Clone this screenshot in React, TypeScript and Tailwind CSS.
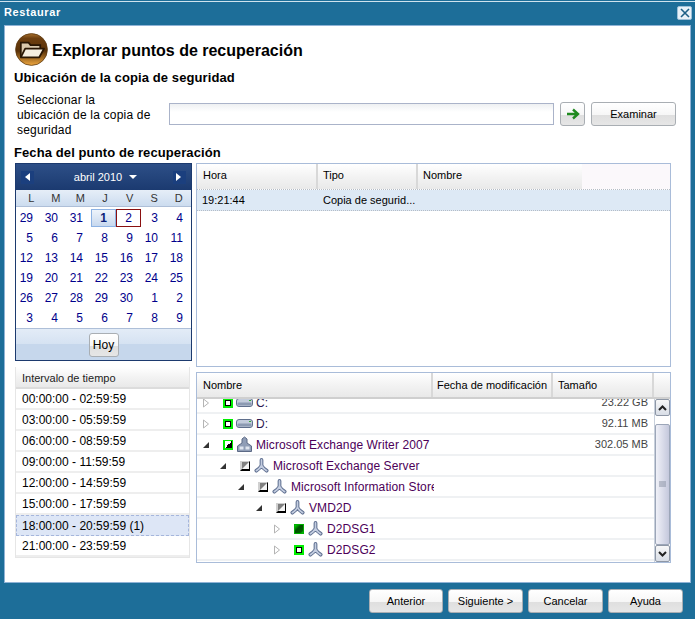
import React from "react";

const days = [
  [29,30,31,1,2,3,4],[5,6,7,8,9,10,11],[12,13,14,15,16,17,18],[19,20,21,22,23,24,25],[26,27,28,29,30,1,2],[3,4,5,6,7,8,9],
];
const intervals = ["00:00:00 - 02:59:59","03:00:00 - 05:59:59","06:00:00 - 08:59:59","09:00:00 - 11:59:59","12:00:00 - 14:59:59","15:00:00 - 17:59:59","18:00:00 - 20:59:59 (1)","21:00:00 - 23:59:59"];

function FolderIcon() {
  return (
    <svg width="33" height="33" viewBox="0 0 34 34">
      <defs>
        <linearGradient id="br" x1="0" y1="0" x2="0" y2="1">
          <stop offset="0" stopColor="#a8702c" /><stop offset="0.15" stopColor="#6e3f10" /><stop offset="0.55" stopColor="#5a3208" /><stop offset="1" stopColor="#f0a840" />
        </linearGradient>
      </defs>
      <circle cx="17" cy="17" r="16.4" fill="url(#br)" stroke="#5a3810" strokeWidth="0.8" />
      <path d="M6 25V10h8l2 2.5h10V16" fill="#d9c8ac" stroke="#2a1704" strokeWidth="1.8" />
      <path d="M6 25l4.5-9H30l-5 9z" fill="#f5eee0" stroke="#2a1704" strokeWidth="1.8" strokeLinejoin="round" />
    </svg>
  );
}
function Arrow() {
  return (
    <svg width="14" height="12" viewBox="0 0 14 12">
      <path d="M1 6h10M7 1.5L12 6l-5 4.5" fill="none" stroke="#1f8a1f" strokeWidth="2.4" />
    </svg>
  );
}
function Btn({ w, children, cls = "" }: { w: string; children: React.ReactNode; cls?: string }) {
  return (
    <div className={`${w} ${cls} h-[24px] flex items-center justify-center rounded-[3px] border border-[#a9aeb3] bg-[linear-gradient(#ffffff_0%,#f6f6f6_55%,#dfdfdf_56%,#e6e6e6_100%)] text-[11px] text-black`}>
      {children}
    </div>
  );
}
function Expand({ open }: { open: boolean }) {
  return open ? (
    <svg width="8" height="8" viewBox="0 0 8 8"><path d="M7 1v6H1z" fill="#333" /></svg>
  ) : (
    <svg width="8" height="10" viewBox="0 0 8 10"><path d="M1.5 1l5 4-5 4z" fill="#fff" stroke="#b4b4b4" /></svg>
  );
}
function Check({ kind }: { kind: "green" | "solid" | "half" | "gray" }) {
  if (kind === "green")
    return <span className="w-[10px] h-[10px] bg-[#00ee00] flex items-center justify-center"><span className="block w-[4px] h-[4px] bg-white border border-black box-content" /></span>;
  if (kind === "solid")
    return <span className="block w-[10px] h-[10px] bg-[linear-gradient(135deg,#00e000_0%,#005000_40%,#006000_80%,#00e000_100%)] border border-[#00b000]" />;
  if (kind === "half")
    return <span className="w-[10px] h-[10px] bg-[#00ee00] flex items-center justify-center"><span className="block w-[7px] h-[7px] bg-[linear-gradient(135deg,#fff_50%,#000_50%)]" /></span>;
  return <span className="w-[10px] h-[10px] bg-[linear-gradient(135deg,#d0d0d0_45%,#000_55%)] flex items-center justify-center"><span className="block w-[7px] h-[7px] bg-[linear-gradient(135deg,#808080_45%,#f4f4f4_55%)]" /></span>;
}
function Tri() {
  const d = "M8 2v6M8 8C7 10 5 12 2.5 13.5M8 8c1 2 3 4 5.5 5.5";
  return (
    <svg width="15" height="15" viewBox="0 0 16 16">
      <path d={d} fill="none" stroke="#5f6f90" strokeWidth="4" strokeLinecap="round" />
      <path d={d} fill="none" stroke="#c3cde0" strokeWidth="1.8" strokeLinecap="round" />
    </svg>
  );
}
function Drive() {
  return (
    <svg width="17" height="11" viewBox="0 0 17 11">
      <rect x="0.5" y="1.5" width="16" height="8" rx="2.5" fill="#c3ccdc" stroke="#5f6f8c" />
      <rect x="1.5" y="5.5" width="14" height="3" rx="1" fill="#8c9ab2" />
      <rect x="13" y="3" width="2" height="1" fill="#2fae2f" />
    </svg>
  );
}
function Server() {
  return (
    <svg width="17" height="17" viewBox="0 0 17 17">
      <path d="M8.5 1l2.5 2v4l4.5 3v5.5h-14V10L6 7V3z" fill="#8f9db6" stroke="#5c6a86" />
      <rect x="3.5" y="10.5" width="4" height="3" fill="#dfe5ef" /><rect x="9.5" y="10.5" width="4" height="3" fill="#dfe5ef" />
    </svg>
  );
}
function Row({ indent, open, check, icon, label, size, color = "text-[#4c0058]", sizeCls = "text-[#444]" }: {
  indent: string; open: boolean; check: "green" | "solid" | "half" | "gray"; icon: React.ReactNode; label: string; size?: string; color?: string; sizeCls?: string;
}) {
  return (
    <div className="h-[21px] border-b-2 border-[#eff1f3] flex items-center shrink-0">
      <div className="w-[237px] shrink-0 overflow-hidden flex items-center h-full">
        <div className={`${indent} w-[18px] flex justify-center shrink-0`}><Expand open={open} /></div>
        <div className="ml-[8px] shrink-0"><Check kind={check} /></div>
        <div className="ml-[3px] w-[17px] flex justify-center shrink-0">{icon}</div>
        <span className={`ml-[3px] text-[12px] tracking-[0.1px] whitespace-nowrap ${color}`}>{label}</span>
      </div>
      <div className={`grow text-right pr-[6px] text-[11px] whitespace-nowrap ${sizeCls}`}>{size}</div>
    </div>
  );
}
const hdr = "bg-[linear-gradient(#ffffff_0%,#f3f3f3_50%,#e9e9e9_100%)]";

export default function App() {
  return (
    <div className="w-[695px] h-[619px] bg-[#1d6e99] flex flex-col overflow-hidden font-['Liberation_Sans',sans-serif] text-[11px] text-black">
      <div className="h-[24px] shrink-0 border-t border-t-[#cfe3ee] mt-[1px] flex items-center justify-between pl-[4px] pr-[3px] pb-[2px]">
        <span className="text-white font-bold text-[11px] tracking-[0.6px]">Restaurar</span>
        <span className="w-[15px] h-[14px] rounded-[2px] bg-[#e8f1f8] border border-[#9dc0d8] flex items-center justify-center">
          <svg width="10" height="10" viewBox="0 0 10 10"><path d="M1 1l8 8M9 1l-8 8" stroke="#1d5f86" strokeWidth="1.6" /></svg>
        </span>
      </div>
      <div className="mx-[4px] h-[558px] shrink-0 bg-white border border-[#8fb3d6] pl-[10px] pr-[15px] flex flex-col">
        <div className="flex items-center gap-[4px] mt-[6px] h-[34px]">
          <FolderIcon />
          <h1 className="text-[16px] font-bold mt-[3px]">Explorar puntos de recuperación</h1>
        </div>
        <div className="text-[13px] font-bold mt-[4px] -ml-[1px] leading-[15px] tracking-[0.1px]">Ubicación de la copia de seguridad</div>
        <div className="flex items-center mt-[7px] h-[46px]">
          <div className="w-[154px] pl-[2px] text-[12px] leading-[15px] tracking-[0.2px] shrink-0">
            <span className="block">Seleccionar la</span>
            <span className="block">ubicación de la copia de</span>
            <span className="block">seguridad</span>
          </div>
          <div className="w-[385px] h-[22px] -mt-[2px] border border-[#aab3c9] bg-[linear-gradient(#eef0f2,#ffffff_40%)] shrink-0" />
          <Btn w="w-[25px]" cls="ml-[6px] shrink-0 -mt-[2px]"><Arrow /></Btn>
          <Btn w="w-[85px]" cls="ml-[6px] shrink-0 -mt-[2px]">Examinar</Btn>
        </div>
        <div className="text-[13px] font-bold mt-[7px] -ml-[1px] leading-[15px] tracking-[0.1px]">Fecha del punto de recuperación</div>
        <div className="flex mt-[3px]">
          <div className="w-[177px] flex flex-col shrink-0">
            <div className="h-[198px] border border-[#1c3a6e] flex flex-col">
              <div className="h-[26px] bg-[linear-gradient(#2d4f87,#1b3a70)] flex items-center justify-between px-[5px] text-white text-[11px]">
                <span className="w-[13px] h-[13px] bg-[#1b3f7e] flex items-center justify-center"><svg width="6" height="8" viewBox="0 0 6 8"><path d="M5 0v8L0 4z" fill="#fff" /></svg></span>
                <span className="flex items-center gap-[7px] ml-[4px]">abril 2010<svg width="8" height="4" viewBox="0 0 8 4"><path d="M0 0h8L4 4z" fill="#fff" /></svg></span>
                <span className="w-[13px] h-[13px] bg-[#1b3f7e] flex items-center justify-center"><svg width="6" height="8" viewBox="0 0 6 8"><path d="M0 0v8l5-4z" fill="#fff" /></svg></span>
              </div>
              <div className="h-[17px] grid grid-cols-7 bg-[linear-gradient(#e6eef8,#ccdcef)] border-b border-[#aebfd8] text-[#333] items-center pl-[3px]">
                {["L","M","M","J","V","S","D"].map((d, i) => <span key={i} className="text-center">{d}</span>)}
              </div>
              <div className="h-[121px] pt-[1px] grid grid-cols-7 grid-rows-6 bg-white">
                {days.flat().map((d, i) => (
                  <div key={i} className={`flex items-center justify-end pr-[8px] text-[12px] ${i === 3 ? "bg-[linear-gradient(#eef4fb,#c7d8ee)] border border-[#8db2e3] font-bold text-[#0a1f78] h-[18px] my-[1px]" : i === 4 ? "border border-[#8a1010] text-[#00008b] h-[18px] my-[1px]" : "text-[#00008b]"}`}>{d}</div>
                ))}
              </div>
              <div className="grow border-t border-[#aebfd8] bg-[linear-gradient(#e3ecf7,#d5e2f2_50%,#c6d7ec_50%,#c6d7ec)] flex items-center justify-center">
                <Btn w="w-[30px]" cls="text-[12px]">Hoy</Btn>
              </div>
            </div>
            <div className="w-[175px] mt-[6px] border-x border-b border-[#e6e6e6]">
              <div className={`h-[22px] ${hdr} border-b-2 border-[#dcdcdc] flex items-center pl-[6px] pt-[2px] text-[11px] text-[#222]`}>Intervalo de tiempo</div>
              {intervals.map((t, i) => (
                <div key={t} className={`h-[21px] flex items-center text-[12px] ${i === 6 ? "pl-[5px] bg-[#dde6f6] border border-dashed border-[#a5b6dc]" : "pl-[6px] border-b-2 border-[#eeeeee]"}`}>{t}</div>
              ))}
            </div>
          </div>
          <div className="w-[475px] ml-[4px] flex flex-col shrink-0">
            <div className="h-[204px] border border-[#a9bcd9] flex flex-col shrink-0">
              <div className={`h-[26px] ${hdr} flex text-[11px] border-b border-dotted border-[#b5bcc6] shrink-0`}>
                <div className="w-[121px] pl-[6px] pt-[3px] border-r-2 border-[#d8d8d8]">Hora</div>
                <div className="w-[100px] pl-[5px] pt-[3px] border-r-2 border-[#d8d8d8]">Tipo</div>
                <div className="w-[164px] pl-[5px] pt-[3px]">Nombre</div>
                <div className="grow bg-[#fbf8fb]" />
              </div>
              <div className="h-[21px] flex items-center bg-[#dde9f5] text-[11px] border-b border-dotted border-[#b5bcc6] pt-[1px]">
                <div className="w-[121px] pl-[5px]">19:21:44</div>
                <div className="pl-[5px]">Copia de segurid...</div>
              </div>
            </div>
            <div className="mt-[5px] h-[191px] border border-[#a9bcd9] flex flex-col shrink-0">
              <div className={`h-[26px] ${hdr} flex text-[11px] border-b-2 border-[#cfcfcf] shrink-0`}>
                <div className="w-[236px] pl-[6px] pt-[4px] border-r-2 border-[#d8d8d8]">Nombre</div>
                <div className="w-[120px] pl-[4px] pt-[4px] border-r-2 border-[#d8d8d8] whitespace-nowrap">Fecha de modificación</div>
                <div className="w-[101px] pl-[5px] pt-[4px] border-r-2 border-[#d8d8d8]">Tamaño</div>
              </div>
              <div className="flex grow min-h-0">
                <div className="grow min-w-0 overflow-hidden flex flex-col">
                  <div className="-mt-[6px] flex flex-col">
                    <Row indent="ml-[0px]" open={false} check="green" icon={<Drive />} label="C:" size="23.22 GB" color="text-[#2c1a50]" />
                    <Row indent="ml-[0px]" open={false} check="green" icon={<Drive />} label="D:" size="92.11 MB" color="text-[#2c1a50]" />
                    <Row indent="ml-[0px]" open={true} check="half" icon={<Server />} label="Microsoft Exchange Writer 2007" size="302.05 MB" />
                    <Row indent="ml-[17px]" open={true} check="gray" icon={<Tri />} label="Microsoft Exchange Server" />
                    <Row indent="ml-[35px]" open={true} check="gray" icon={<Tri />} label="Microsoft Information Store" />
                    <Row indent="ml-[53px]" open={true} check="gray" icon={<Tri />} label="VMD2D" />
                    <Row indent="ml-[71px]" open={false} check="solid" icon={<Tri />} label="D2DSG1" />
                    <Row indent="ml-[71px]" open={false} check="green" icon={<Tri />} label="D2DSG2" />
                  </div>
                </div>
                <div className="w-[16px] shrink-0 flex flex-col bg-white border-l border-[#c8d0dc]">
                  <div className="h-[17px] flex items-center justify-center bg-[linear-gradient(#f8f8f8,#d8dde6)] border border-[#8e97a6] rounded-[2px]"><svg width="9" height="6" viewBox="0 0 9 6"><path d="M1 5l3.5-3.5L8 5" fill="none" stroke="#222" strokeWidth="2" /></svg></div>
                  <div className="h-[8px]" />
                  <div className="grow flex items-center justify-center bg-[linear-gradient(90deg,#f0f1f8,#c4c8dc)] border border-[#9ca6b8] rounded-[2px]"><svg width="7" height="7" viewBox="0 0 7 7"><path d="M0 1h7M0 3h7M0 5h7" stroke="#8a92a4" /></svg></div>
                  <div className="h-[17px] flex items-center justify-center bg-[linear-gradient(#f8f8f8,#d8dde6)] border border-[#8e97a6] rounded-[2px]"><svg width="9" height="6" viewBox="0 0 9 6"><path d="M1 1l3.5 3.5L8 1" fill="none" stroke="#222" strokeWidth="2" /></svg></div>
                </div>
              </div>
            </div>
          </div>
        </div>
      </div>
      <div className="flex justify-end gap-[5px] mt-[6px] pr-[12px]">
        <Btn w="w-[74px]">Anterior</Btn>
        <Btn w="w-[75px]">Siguiente &gt;</Btn>
        <Btn w="w-[75px]">Cancelar</Btn>
        <Btn w="w-[75px]">Ayuda</Btn>
      </div>
    </div>
  );
}
